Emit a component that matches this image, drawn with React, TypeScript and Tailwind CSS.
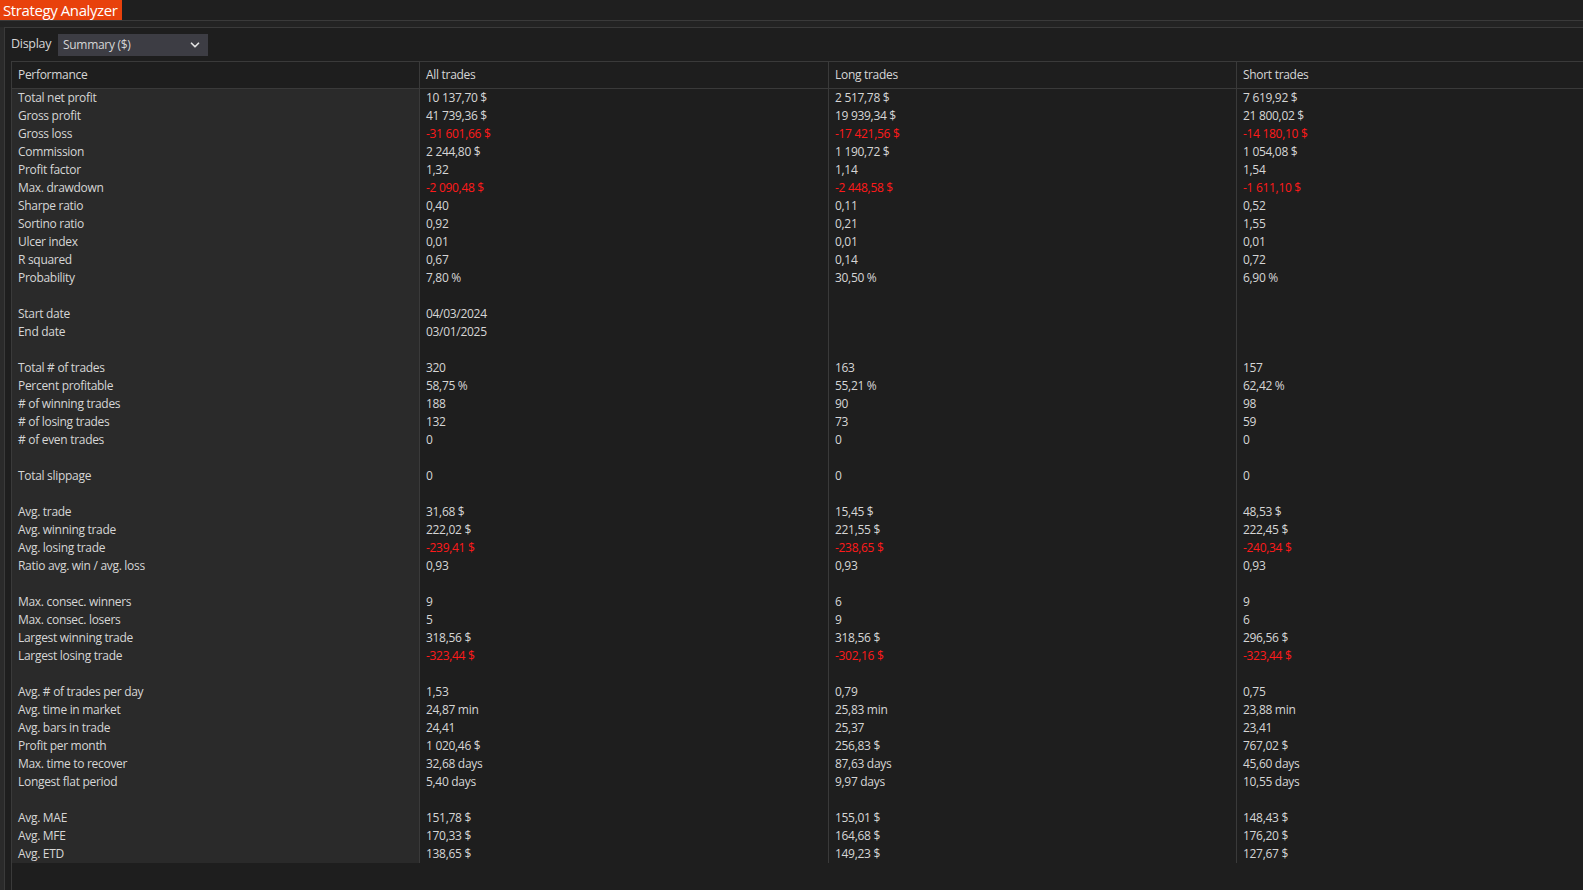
import { ChevronDown } from "lucide-react";

type Row = {
  label: string;
  all: string;
  long: string;
  short: string;
  neg?: boolean;
} | null;

const rows: Row[] = [
  { label: "Total net profit", all: "10 137,70 $", long: "2 517,78 $", short: "7 619,92 $" },
  { label: "Gross profit", all: "41 739,36 $", long: "19 939,34 $", short: "21 800,02 $" },
  { label: "Gross loss", all: "-31 601,66 $", long: "-17 421,56 $", short: "-14 180,10 $", neg: true },
  { label: "Commission", all: "2 244,80 $", long: "1 190,72 $", short: "1 054,08 $" },
  { label: "Profit factor", all: "1,32", long: "1,14", short: "1,54" },
  { label: "Max. drawdown", all: "-2 090,48 $", long: "-2 448,58 $", short: "-1 611,10 $", neg: true },
  { label: "Sharpe ratio", all: "0,40", long: "0,11", short: "0,52" },
  { label: "Sortino ratio", all: "0,92", long: "0,21", short: "1,55" },
  { label: "Ulcer index", all: "0,01", long: "0,01", short: "0,01" },
  { label: "R squared", all: "0,67", long: "0,14", short: "0,72" },
  { label: "Probability", all: "7,80 %", long: "30,50 %", short: "6,90 %" },
  null,
  { label: "Start date", all: "04/03/2024", long: "", short: "" },
  { label: "End date", all: "03/01/2025", long: "", short: "" },
  null,
  { label: "Total # of trades", all: "320", long: "163", short: "157" },
  { label: "Percent profitable", all: "58,75 %", long: "55,21 %", short: "62,42 %" },
  { label: "# of winning trades", all: "188", long: "90", short: "98" },
  { label: "# of losing trades", all: "132", long: "73", short: "59" },
  { label: "# of even trades", all: "0", long: "0", short: "0" },
  null,
  { label: "Total slippage", all: "0", long: "0", short: "0" },
  null,
  { label: "Avg. trade", all: "31,68 $", long: "15,45 $", short: "48,53 $" },
  { label: "Avg. winning trade", all: "222,02 $", long: "221,55 $", short: "222,45 $" },
  { label: "Avg. losing trade", all: "-239,41 $", long: "-238,65 $", short: "-240,34 $", neg: true },
  { label: "Ratio avg. win / avg. loss", all: "0,93", long: "0,93", short: "0,93" },
  null,
  { label: "Max. consec. winners", all: "9", long: "6", short: "9" },
  { label: "Max. consec. losers", all: "5", long: "9", short: "6" },
  { label: "Largest winning trade", all: "318,56 $", long: "318,56 $", short: "296,56 $" },
  { label: "Largest losing trade", all: "-323,44 $", long: "-302,16 $", short: "-323,44 $", neg: true },
  null,
  { label: "Avg. # of trades per day", all: "1,53", long: "0,79", short: "0,75" },
  { label: "Avg. time in market", all: "24,87 min", long: "25,83 min", short: "23,88 min" },
  { label: "Avg. bars in trade", all: "24,41", long: "25,37", short: "23,41" },
  { label: "Profit per month", all: "1 020,46 $", long: "256,83 $", short: "767,02 $" },
  { label: "Max. time to recover", all: "32,68 days", long: "87,63 days", short: "45,60 days" },
  { label: "Longest flat period", all: "5,40 days", long: "9,97 days", short: "10,55 days" },
  null,
  { label: "Avg. MAE", all: "151,78 $", long: "155,01 $", short: "148,43 $" },
  { label: "Avg. MFE", all: "170,33 $", long: "164,68 $", short: "176,20 $" },
  { label: "Avg. ETD", all: "138,65 $", long: "149,23 $", short: "127,67 $" },
];

function Cell({ text, neg }: { text: string; neg?: boolean }) {
  return (
    <div
      className={
        "h-[18px] leading-[18px] pl-[6px] whitespace-nowrap border-l border-[#3a3a3a] " +
        (neg ? "text-[#ff1a1a]" : "text-[#d6d6d6]")
      }
    >
      {text}
    </div>
  );
}

export default function App() {
  return (
    <div
      className="w-[1583px] h-[890px] overflow-hidden bg-[#1e1e1e] text-[12px] tracking-[-0.3px] text-[#d6d6d6]"
      style={{ fontFamily: '"Open Sans", "Noto Sans", sans-serif' }}
    >
      {/* tab strip */}
      <div className="h-[21px] flex border-b border-[#3a3a3a] bg-[#1f1f1f]">
        <div className="h-[20px] pl-[3px] pr-[5px] bg-[#e8410c] text-white text-[15px] leading-[20px] tracking-[-0.4px]">
          Strategy Analyzer
        </div>
      </div>

      <div className="h-[6px] bg-[#232323]" />

      <div className="flex h-[863px]">
        <div className="w-[4px] bg-[#2a2a2a]" />
        <div className="flex-1 border-l border-t border-[#3a3a3a] bg-[#1e1e1e] pl-[6px] flex flex-col">
          {/* display row */}
          <div className="flex items-center h-[33px] pt-[5px] pb-[5px]">
            <span className="w-[47px] text-[#d6d6d6] text-[12.5px]">Display</span>
            <div className="w-[150px] h-[22px] bg-[#3d3d44] flex items-center justify-between pl-[5px] pr-[6px] text-[12px]">
              <span>Summary ($)</span>
              <ChevronDown size={14} strokeWidth={3} className="text-[#e0e0e0]" />
            </div>
          </div>

          {/* table */}
          <div className="border-t border-l border-[#3a3a3a] flex-1 flex flex-col">
            <div className="grid grid-cols-[407px_409px_408px_1fr] h-[27px] border-b border-[#3a3a3a]">
              <div className="pl-[6px] leading-[26px]">Performance</div>
              <div className="pl-[6px] leading-[26px] border-l border-[#3a3a3a]">All trades</div>
              <div className="pl-[6px] leading-[26px] border-l border-[#3a3a3a]">Long trades</div>
              <div className="pl-[6px] leading-[26px] border-l border-[#3a3a3a]">Short trades</div>
            </div>
            <div className="grid grid-cols-[407px_409px_408px_1fr]">
              {rows.map((r, i) =>
                r ? (
                  <div key={i} className="contents">
                    <div className="h-[18px] leading-[18px] pl-[6px] bg-[#2a2a2a] whitespace-nowrap">
                      {r.label}
                    </div>
                    <Cell text={r.all} neg={r.neg} />
                    <Cell text={r.long} neg={r.neg} />
                    <Cell text={r.short} neg={r.neg} />
                  </div>
                ) : (
                  <div key={i} className="contents">
                    <div className="h-[18px] bg-[#2a2a2a]" />
                    <Cell text="" />
                    <Cell text="" />
                    <Cell text="" />
                  </div>
                )
              )}
            </div>
          </div>
        </div>
      </div>
    </div>
  );
}
